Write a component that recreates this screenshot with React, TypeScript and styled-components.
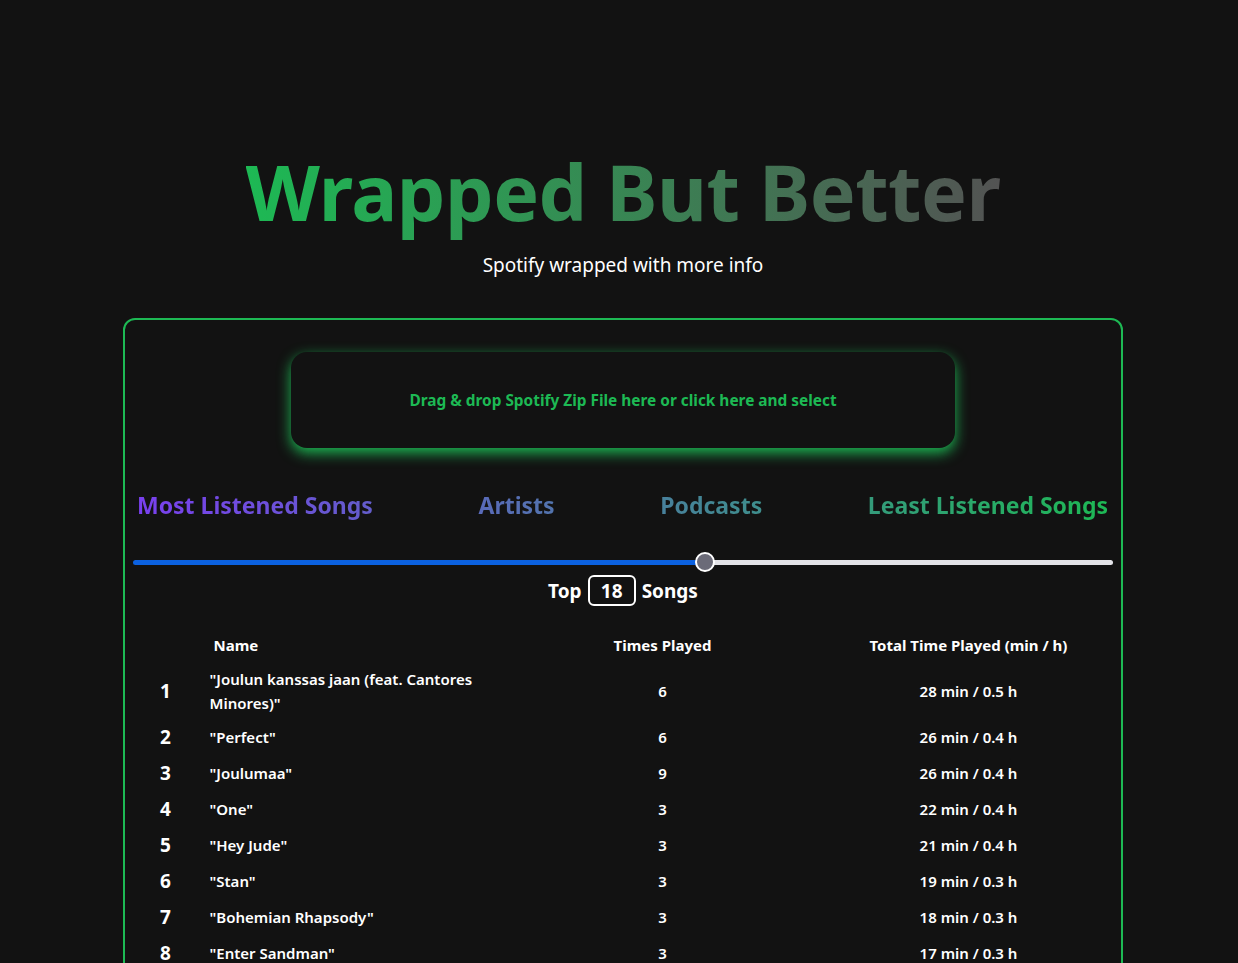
import React from "react";
import styled, { createGlobalStyle } from "styled-components";

const Global = createGlobalStyle`
  html, body { margin: 0; padding: 0; background: #121212; }
  body { font-family: "Noto Sans", "Open Sans", sans-serif; color: #ffffff; }
  #root { padding-left: 8px; }
`;

const Page = styled.div`
  display: flex;
  flex-direction: column;
  align-items: center;
  padding-top: 140px;
`;

const Title = styled.h1`
  margin: 0;
  font-size: 77px;
  line-height: 104px;
  font-weight: 700;
  letter-spacing: -0.5px;
  background: linear-gradient(to right, #1db954, #535353);
  -webkit-background-clip: text;
  background-clip: text;
  color: transparent;
`;

const Subtitle = styled.p`
  margin: 7px 0 0;
  font-size: 19px;
  line-height: 28px;
  font-weight: 400;
`;

const Card = styled.section`
  box-sizing: border-box;
  width: 1000px;
  margin-top: 39px;
  border: 2px solid #1db954;
  border-radius: 12px;
  padding: 32px 8px 40px;
  display: flex;
  flex-direction: column;
  align-items: center;
`;

const DropZone = styled.div`
  width: 664px;
  height: 96px;
  border-radius: 16px;
  background: #121212;
  box-shadow: 0 5px 14px #1db954;
  display: flex;
  align-items: center;
  justify-content: center;
  color: #1db954;
  font-weight: 700;
  font-size: 15.4px;
  cursor: pointer;
`;

const Tabs = styled.nav`
  align-self: stretch;
  margin-top: 41px;
  padding: 0 5px 0 4px;
  display: flex;
  justify-content: space-between;
  background: linear-gradient(to right, #7a3ff0, #1db954);
  -webkit-background-clip: text;
  background-clip: text;
  color: transparent;
`;

const Tab = styled.span`
  font-size: 23px;
  line-height: 32px;
  font-weight: 700;
  cursor: pointer;
`;

const Slider = styled.div`
  align-self: stretch;
  margin-top: 31px;
  display: flex;
  align-items: center;
  height: 20px;
`;

const Fill = styled.div`
  height: 5px;
  border-radius: 3px 0 0 3px;
  background: #0b61e0;
  flex: none;
`;

const Thumb = styled.div`
  box-sizing: border-box;
  width: 20px;
  height: 20px;
  margin: 0 -2px;
  border-radius: 50%;
  background: #6b6b78;
  border: 2px solid #ffffff;
  flex: none;
  position: relative;
  z-index: 1;
`;

const Rest = styled.div`
  flex: 1;
  height: 5px;
  border-radius: 0 3px 3px 0;
  background: #e3e3e8;
`;

const CountRow = styled.div`
  display: flex;
  align-items: center;
  gap: 6px;
  margin-top: 3px;
  font-size: 19px;
  font-weight: 700;
`;

const CountBox = styled.span`
  box-sizing: border-box;
  width: 48px;
  height: 31px;
  border: 2px solid #ffffff;
  border-radius: 6px;
  display: flex;
  align-items: center;
  justify-content: center;
`;

const Table = styled.table`
  width: 971px;
  margin-top: 21px;
  border-collapse: collapse;
  table-layout: fixed;
`;

const Th = styled.th<{ $align?: string }>`
  font-size: 15px;
  font-weight: 700;
  line-height: 24px;
  padding: 6px 12px;
  text-align: ${(p) => p.$align || "center"};
`;

const Rank = styled.td`
  font-size: 19px;
  font-weight: 700;
  text-align: center;
  padding: 4px 0;
  line-height: 28px;
`;

const Td = styled.td<{ $align?: string }>`
  font-size: 15px;
  font-weight: 600;
  line-height: 24px;
  padding: 4px 12px;
  text-align: ${(p) => p.$align || "center"};
  vertical-align: middle;
`;

const songs = [
  ["\"Joulun kanssas jaan (feat. Cantores Minores)\"", "6", "28 min / 0.5 h"],
  ["\"Perfect\"", "6", "26 min / 0.4 h"],
  ["\"Joulumaa\"", "9", "26 min / 0.4 h"],
  ["\"One\"", "3", "22 min / 0.4 h"],
  ["\"Hey Jude\"", "3", "21 min / 0.4 h"],
  ["\"Stan\"", "3", "19 min / 0.3 h"],
  ["\"Bohemian Rhapsody\"", "3", "18 min / 0.3 h"],
  ["\"Enter Sandman\"", "3", "17 min / 0.3 h"],
  ["\"Smells Like Teen Spirit\"", "3", "16 min / 0.3 h"],
  ["\"Hallelujah\"", "3", "15 min / 0.3 h"],
];

export default function App() {
  const pct = 0.58;
  return (
    <>
      <Global />
      <Page>
        <Title>Wrapped But Better</Title>
        <Subtitle>Spotify wrapped with more info</Subtitle>
        <Card>
          <DropZone>Drag &amp; drop Spotify Zip File here or click here and select</DropZone>
          <Tabs>
            <Tab>Most Listened Songs</Tab>
            <Tab>Artists</Tab>
            <Tab>Podcasts</Tab>
            <Tab>Least Listened Songs</Tab>
          </Tabs>
          <Slider>
            <Fill style={{ width: `calc(${pct * 100}% - 4px)` }} />
            <Thumb />
            <Rest />
          </Slider>
          <CountRow>
            <span>Top</span>
            <CountBox>18</CountBox>
            <span>Songs</span>
          </CountRow>
          <Table>
            <colgroup>
              <col style={{ width: 56 }} />
              <col style={{ width: 303 }} />
              <col style={{ width: 332 }} />
              <col style={{ width: 280 }} />
            </colgroup>
            <thead>
              <tr>
                <Th />
                <Th $align="left" style={{ paddingLeft: 20 }}>Name</Th>
                <Th>Times Played</Th>
                <Th>Total Time Played (min / h)</Th>
              </tr>
            </thead>
            <tbody>
              {songs.map((s, i) => (
                <tr key={i}>
                  <Rank>{i + 1}</Rank>
                  <Td $align="left" style={{ paddingLeft: 16 }}>{s[0]}</Td>
                  <Td>{s[1]}</Td>
                  <Td>{s[2]}</Td>
                </tr>
              ))}
            </tbody>
          </Table>
        </Card>
      </Page>
    </>
  );
}
